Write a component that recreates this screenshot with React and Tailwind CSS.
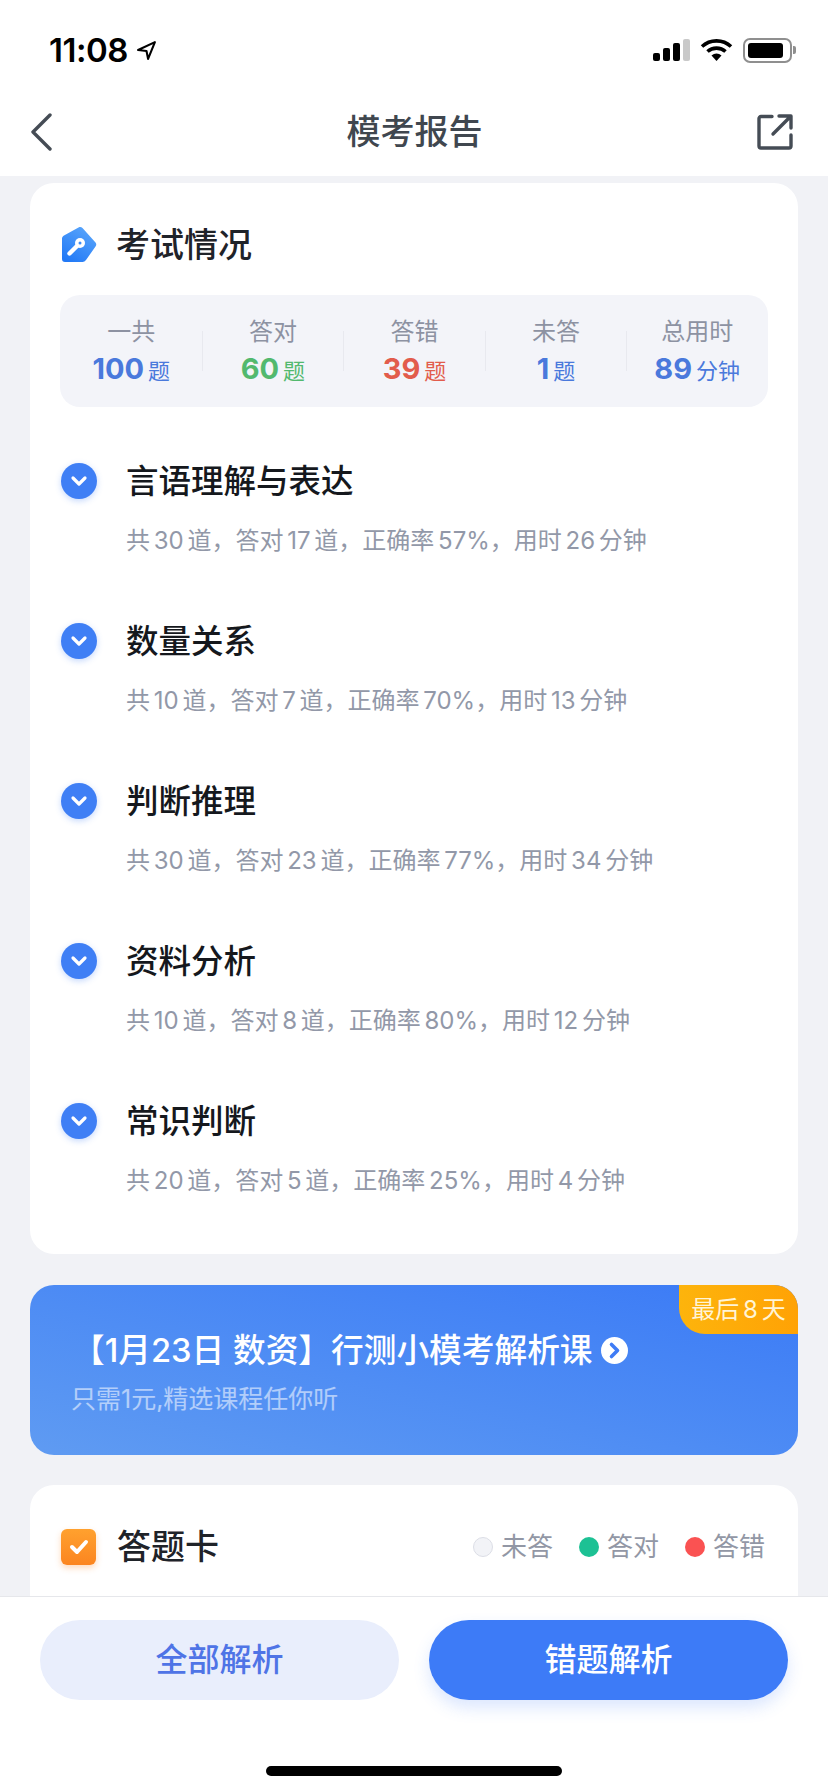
const font = "font-['Inter','Noto_Sans_CJK_SC',sans-serif]";

const stats = [
  { label: '一共', value: '100', unit: '题', color: 'text-[#4a79dc]' },
  { label: '答对', value: '60', unit: '题', color: 'text-[#52b96e]' },
  { label: '答错', value: '39', unit: '题', color: 'text-[#e25c4c]' },
  { label: '未答', value: '1', unit: '题', color: 'text-[#4a79dc]' },
  { label: '总用时', value: '89', unit: '分钟', color: 'text-[#4a79dc]' },
];

const sections = [
  { title: '言语理解与表达', text: '共 30 道，答对 17 道，正确率 57%，用时 26 分钟' },
  { title: '数量关系', text: '共 10 道，答对 7 道，正确率 70%，用时 13 分钟' },
  { title: '判断推理', text: '共 30 道，答对 23 道，正确率 77%，用时 34 分钟' },
  { title: '资料分析', text: '共 10 道，答对 8 道，正确率 80%，用时 12 分钟' },
  { title: '常识判断', text: '共 20 道，答对 5 道，正确率 25%，用时 4 分钟' },
];

function StatusBar() {
  return (
    <div className="h-[88px] flex items-center justify-between pl-[49px] pr-[32px] pt-[12px] shrink-0">
      <div className="flex items-center gap-[8px]">
        <span className="text-[33px] font-semibold tracking-[-0.5px] text-black leading-none">11:08</span>
        <svg width="21" height="21" viewBox="0 0 20 20" fill="none">
          <path d="M18 2 L2 9.5 L10 10.5 L11.5 18 Z" stroke="#000" strokeWidth="2" strokeLinejoin="round" />
        </svg>
      </div>
      <div className="flex items-center gap-[10px]">
        <svg width="37" height="24" viewBox="0 0 37 24">
          <rect x="0" y="15" width="7" height="8" rx="2" fill="#000" />
          <rect x="10" y="10" width="7" height="13" rx="2" fill="#000" />
          <rect x="20" y="5" width="7" height="18" rx="2" fill="#000" />
          <rect x="30" y="1" width="7" height="22" rx="2" fill="#c9c9c9" />
        </svg>
        <svg width="33" height="24" viewBox="0 0 33 24" fill="none">
          <path d="M2 8.5 C10 1, 23 1, 31 8.5" stroke="#000" strokeWidth="3.6" />
          <path d="M7.5 13.5 C12.5 9, 20.5 9, 25.5 13.5" stroke="#000" strokeWidth="3.6" />
          <path d="M11.5 17.5 L16.5 23 L21.5 17.5 C18.5 14.8, 14.5 14.8, 11.5 17.5 Z" fill="#000" />
        </svg>
        <div className="flex items-center">
          <div className="w-[49px] h-[25px] rounded-[7px] border-2 border-[#8f8f8f] p-[3px]">
            <div className="w-[35px] h-full rounded-[3px] bg-black" />
          </div>
          <div className="w-[3px] h-[8px] rounded-r-[2px] bg-[#8f8f8f] ml-[1px]" />
        </div>
      </div>
    </div>
  );
}

function NavBar() {
  return (
    <div className="h-[88px] flex items-center pl-[30px] pr-[35px] shrink-0">
      <div className="flex-1 flex justify-start">
        <svg width="24" height="38" viewBox="0 0 24 38" fill="none">
          <path d="M20 2 L3 19 L20 36" stroke="#454c55" strokeWidth="3.4" strokeLinecap="round" strokeLinejoin="round" />
        </svg>
      </div>
      <div className="ml-[6px] text-[34px] font-medium text-[#40474f] leading-none">模考报告</div>
      <div className="flex-1 flex justify-end">
        <svg width="36" height="36" viewBox="0 0 36 36" fill="none">
          <path d="M15 2.5 H4 A2 2 0 0 0 2 4.5 V32 A2 2 0 0 0 4 34 H32 A2 2 0 0 0 34 32 V21" stroke="#454c55" strokeWidth="3.4" strokeLinecap="round" />
          <path d="M16 20 L33 3 M22 2 H34 V14" stroke="#454c55" strokeWidth="3.4" strokeLinecap="round" strokeLinejoin="round" />
        </svg>
      </div>
    </div>
  );
}

function PenIcon() {
  return (
    <svg width="38" height="38" viewBox="0 0 38 38" className="shrink-0">
      <defs>
        <linearGradient id="pen" x1="0.8" y1="0" x2="0.2" y2="1">
          <stop offset="0" stopColor="#5aa6fb" />
          <stop offset="1" stopColor="#2279f6" />
        </linearGradient>
      </defs>
      <path d="M2 12.5 C2 11 3 10 4 9.5 L18.5 1.5 C20 .8 21.5 1 22.5 2 L35.5 16.5 C36.5 17.7 36.5 19.3 35.5 20.5 L26 34 C25 35.3 24 36 22.5 36 H5 C3 36 2 35 2 33 Z" fill="url(#pen)" />
      <circle cx="20" cy="17" r="5" fill="#fff" />
      <path d="M17 20 L9.5 27.5" stroke="#fff" strokeWidth="4.4" strokeLinecap="round" />
      <circle cx="20" cy="17" r="1.5" fill="#3b8cf8" />
    </svg>
  );
}

function SectionRow({ title, text }) {
  return (
    <div className="h-[160px] flex items-start pl-[31px]">
      <div className="w-[36px] h-[36px] mt-[3px] rounded-full bg-[#3f7ff5] flex items-center justify-center shrink-0 shadow-[0_2px_6px_rgba(63,127,245,0.3)]">
        <svg width="18" height="12" viewBox="0 0 18 12" fill="none">
          <path d="M3 3 L9 9 L15 3" stroke="#fff" strokeWidth="3.2" strokeLinecap="round" strokeLinejoin="round" />
        </svg>
      </div>
      <div className="ml-[29px]">
        <div className="text-[32.5px] leading-[44px] font-medium text-[#15181d]">{title}</div>
        <div className="mt-[20px] text-[24px] leading-[34px] text-[#9298a8] [word-spacing:-3px]">{text}</div>
      </div>
    </div>
  );
}

function ReportCard() {
  return (
    <div className="h-[1071px] rounded-[24px] bg-white shrink-0 overflow-hidden">
      <div className="flex items-center pl-[30px] pt-[42px] h-[82px] gap-[18px]">
        <PenIcon />
        <div className="text-[34px] leading-none font-medium text-[#1f2329]">考试情况</div>
      </div>
      <div className="mx-[30px] mt-[30px] h-[112px] rounded-[20px] bg-[#f3f4f9] grid grid-cols-5 items-center">
        {stats.map((s, i) => (
          <div key={s.label} className={i < 4 ? 'flex flex-col items-center border-r border-[#e8e9ef] h-[40px] justify-center pt-[3px] translate-x-[1px]' : 'flex flex-col items-center h-[40px] justify-center pt-[3px]'}>
            <div className="text-[24px] leading-[32px] text-[#8d92a2]">{s.label}</div>
            <div className={`mt-[3px] flex items-baseline gap-[4px] leading-[36px] ${s.color}`}>
              <span className="text-[29px] font-bold">{s.value}</span>
              <span className="text-[22px]">{s.unit}</span>
            </div>
          </div>
        ))}
      </div>
      <div className="mt-[53px]">
        {sections.map((s) => (
          <SectionRow key={s.title} title={s.title} text={s.text} />
        ))}
      </div>
    </div>
  );
}

function Banner() {
  return (
    <div className="relative mt-[31px] h-[170px] rounded-[24px] bg-linear-to-tr from-[#5f9bf2] to-[#3b7af6] shrink-0 overflow-hidden pl-[42px] pt-[45px]">
      <div className="absolute top-0 right-0 w-[119px] h-[49px] rounded-bl-[26px] bg-linear-to-r from-[#fdb40c] to-[#ffa205] flex items-center justify-center text-[24px] text-[#fff4d6] [word-spacing:-3px]">
        最后 8 天
      </div>
      <div className="flex items-center gap-[8px]">
        <span className="text-[32.7px] leading-[40px] text-white font-medium">【1月23日 数资】行测小模考解析课</span>
        <svg width="27" height="27" viewBox="0 0 27 27">
          <circle cx="13.5" cy="13.5" r="13.5" fill="#fff" />
          <path d="M10.5 7.5 L16.5 13.5 L10.5 19.5" stroke="#3f7cf5" strokeWidth="3.6" fill="none" strokeLinecap="round" strokeLinejoin="round" />
        </svg>
      </div>
      <div className="mt-[12px] -ml-[1px] text-[25px] leading-[34px] text-white/55">只需1元,精选课程任你听</div>
    </div>
  );
}

function LegendItem({ label, dot }) {
  return (
    <div className="flex items-center gap-[8px]">
      <div className={`w-[20px] h-[20px] rounded-full ${dot}`} />
      <span className="text-[26px] leading-none text-[#9297a5]">{label}</span>
    </div>
  );
}

function AnswerCard() {
  return (
    <div className="mt-[30px] h-[200px] rounded-[24px] bg-white shrink-0 pl-[31px] pr-[33px] pt-[44px]">
      <div className="flex items-center justify-between">
        <div className="flex items-center gap-[21px]">
          <div className="w-[35px] h-[36px] rounded-[6px] bg-linear-to-b from-[#ffa12e] to-[#fb8520] flex items-center justify-center shadow-[0_3px_6px_rgba(251,133,32,0.3)]">
            <svg width="22" height="18" viewBox="0 0 22 18" fill="none">
              <path d="M4 9 L9 14 L18 4" stroke="#fff" strokeWidth="4" strokeLinecap="round" strokeLinejoin="round" />
            </svg>
          </div>
          <div className="text-[34px] leading-none font-medium text-[#1f2329]">答题卡</div>
        </div>
        <div className="flex items-center gap-[26px]">
          <LegendItem label="未答" dot="bg-[#f2f3f7] border border-[#dcdee6]" />
          <LegendItem label="答对" dot="bg-[#1dc194]" />
          <LegendItem label="答错" dot="bg-[#fa5252]" />
        </div>
      </div>
    </div>
  );
}

function BottomBar() {
  return (
    <div className="absolute left-0 right-0 bottom-0 h-[196px] bg-white border-t border-[#e6e7eb] flex flex-col">
      <div className="mt-[23px] px-[40px] flex gap-[30px]">
        <div className="w-[359px] h-[80px] rounded-full bg-[#e9eefc] flex items-center justify-center text-[32px] font-medium text-[#4f74e6]">全部解析</div>
        <div className="w-[359px] h-[80px] rounded-full bg-[#3d7bf7] flex items-center justify-center text-[32px] font-medium text-white shadow-[0_8px_16px_rgba(61,123,247,0.18)]">错题解析</div>
      </div>
      <div className="mt-[66px] mx-auto w-[296px] h-[10px] rounded-full bg-black" />
    </div>
  );
}

export default function App() {
  return (
    <div className={`relative w-[828px] h-[1792px] overflow-hidden bg-white flex flex-col ${font}`}>
      <StatusBar />
      <NavBar />
      <div className="flex-1 bg-[#f1f2f6] px-[30px] pt-[7px] flex flex-col overflow-hidden">
        <ReportCard />
        <Banner />
        <AnswerCard />
      </div>
      <BottomBar />
    </div>
  );
}
